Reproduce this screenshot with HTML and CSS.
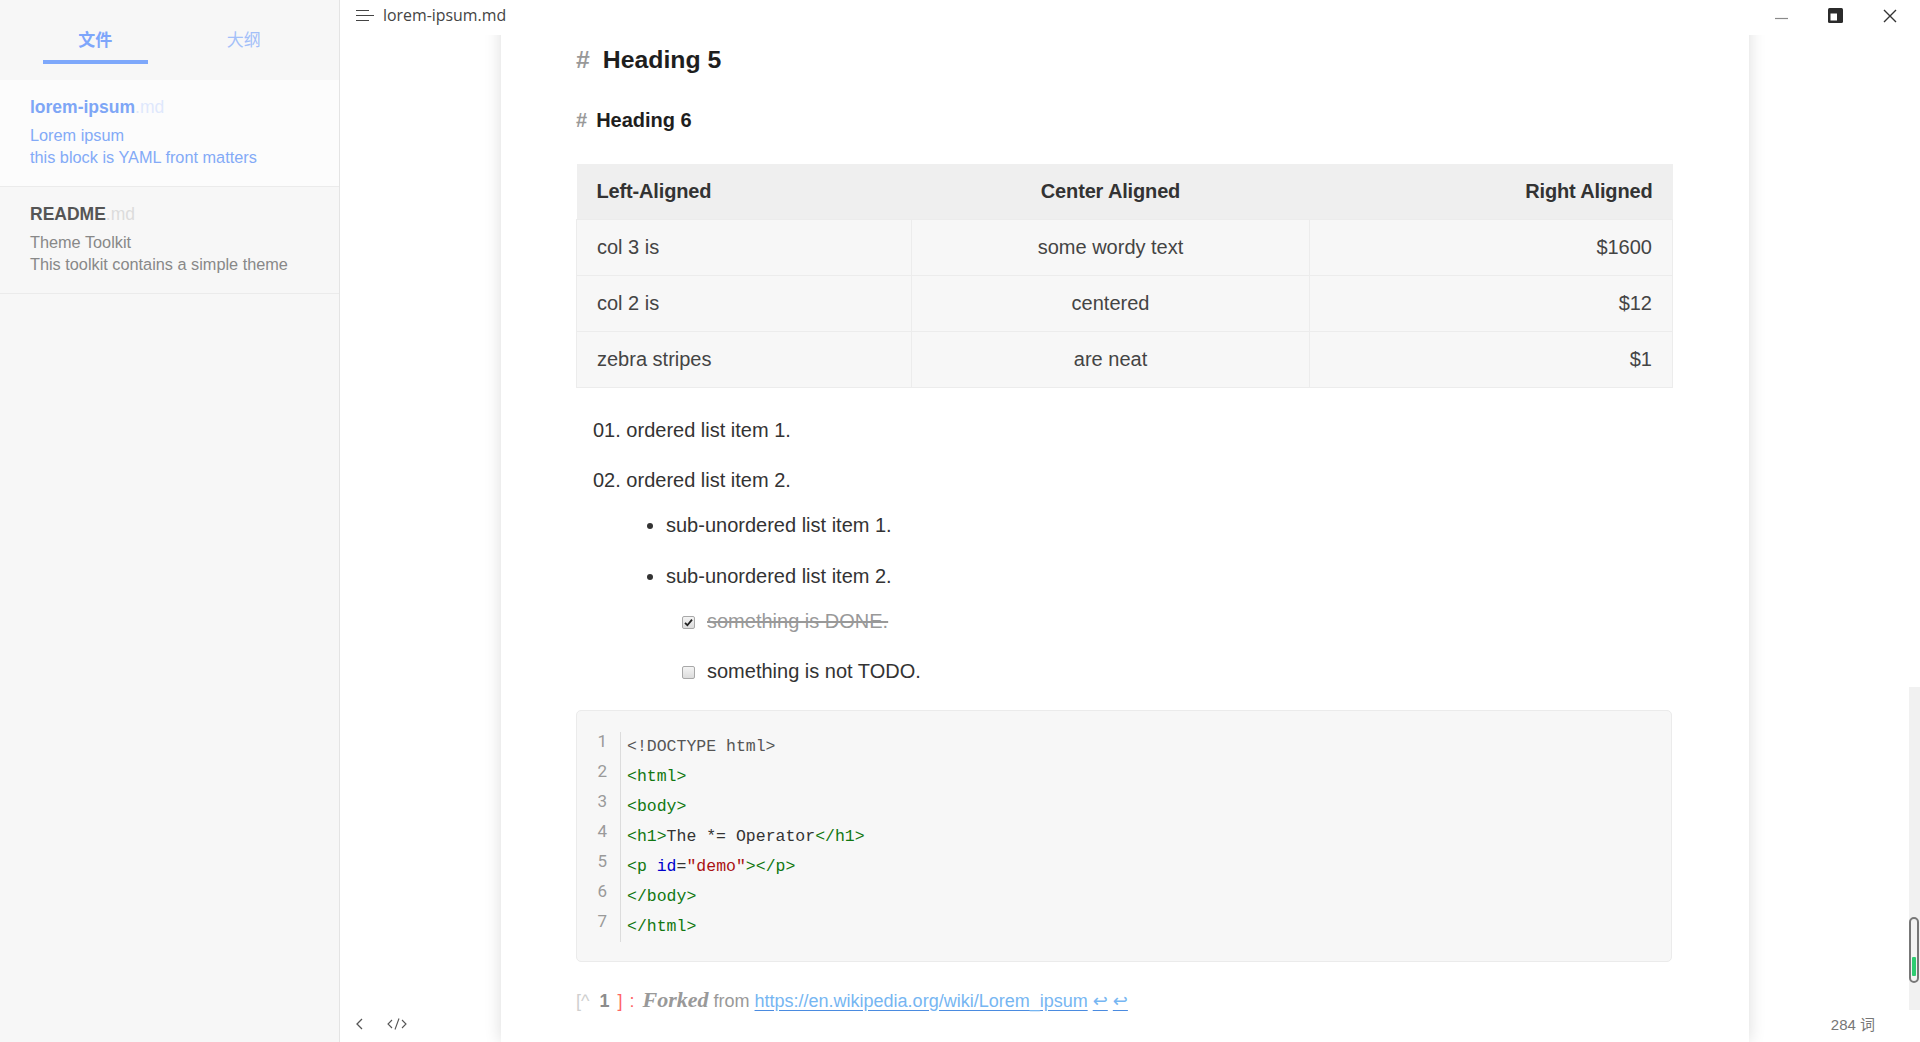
FILE: index.html
```html
<!DOCTYPE html>
<html lang="zh">
<head>
<meta charset="utf-8">
<title>lorem-ipsum.md</title>
<link rel="stylesheet" href="styles.css">
</head>
<body>
<aside class="sidebar">
  <div class="tabs">
    <div class="tab active"><span class="tab-label">文件</span><span class="tab-bar"></span></div>
    <div class="tab"><span class="tab-label">大纲</span></div>
  </div>
  <div class="file active">
    <div class="file-title">lorem-ipsum<span class="ext">.md</span></div>
    <div class="file-desc">Lorem ipsum<br>this block is YAML front matters</div>
  </div>
  <div class="file">
    <div class="file-title">README<span class="ext">.md</span></div>
    <div class="file-desc">Theme Toolkit<br>This toolkit contains a simple theme</div>
  </div>
</aside>

<main class="main">
  <header class="titlebar">
    <svg class="menu-icon" width="20" height="14" viewBox="0 0 20 14"><path d="M0 2.5H13M0 7.5H18M0 12.5H13" stroke="#444" stroke-width="1.1" fill="none"/></svg>
    <span class="doc-name">lorem-ipsum.md</span>
    <div class="wincontrols">
      <svg width="14" height="14" viewBox="0 0 14 14"><path d="M0 7.5H13" stroke="#8a8a8a" stroke-width="1.2"/></svg>
      <svg width="15" height="15" viewBox="0 0 15 15"><rect x="0" y="0" width="15" height="15" rx="1.5" fill="#2b2b2b"/><rect x="2.5" y="5.5" width="6.5" height="7" fill="#fff"/></svg>
      <svg width="14" height="14" viewBox="0 0 14 14"><path d="M1 1L13 13M13 1L1 13" stroke="#333" stroke-width="1.4"/></svg>
    </div>
  </header>

  <div class="scroller">
    <article class="page">
      <h5 class="h5"><span class="hash">#</span>Heading 5</h5>
      <h6 class="h6"><span class="hash">#</span>Heading 6</h6>

      <table class="tbl">
        <thead>
          <tr><th class="c1">Left-Aligned</th><th class="c2">Center Aligned</th><th class="c3">Right Aligned</th></tr>
        </thead>
        <tbody>
          <tr><td class="c1">col 3 is</td><td class="c2">some wordy text</td><td class="c3">$1600</td></tr>
          <tr><td class="c1">col 2 is</td><td class="c2">centered</td><td class="c3">$12</td></tr>
          <tr><td class="c1">zebra stripes</td><td class="c2">are neat</td><td class="c3">$1</td></tr>
        </tbody>
      </table>

      <ol class="olist">
        <li><span class="num">01.</span> ordered list item 1.</li>
        <li><span class="num">02.</span> ordered list item 2.
          <ul class="ulist">
            <li>sub-unordered list item 1.</li>
            <li>sub-unordered list item 2.
              <ul class="tasks">
                <li class="done"><span class="cb checked"><svg width="9" height="9" viewBox="0 0 9 9"><path d="M1 4.8L3.4 7.2L8 1.6" stroke="#222" stroke-width="1.8" fill="none"/></svg></span><span class="task-text">something is DONE.</span></li>
                <li><span class="cb"></span><span class="task-text">something is not TODO.</span></li>
              </ul>
            </li>
          </ul>
        </li>
      </ol>

      <div class="code">
        <div class="gutter"><span>1</span><span>2</span><span>3</span><span>4</span><span>5</span><span>6</span><span>7</span></div>
        <pre class="lines"><span class="meta">&lt;!DOCTYPE html&gt;</span>
<span class="tag">&lt;html&gt;</span>
<span class="tag">&lt;body&gt;</span>
<span class="tag">&lt;h1&gt;</span>The *= Operator<span class="tag">&lt;/h1&gt;</span>
<span class="tag">&lt;p</span> <span class="attr">id</span>=<span class="str">"demo"</span><span class="tag">&gt;&lt;/p&gt;</span>
<span class="tag">&lt;/body&gt;</span>
<span class="tag">&lt;/html&gt;</span></pre>
      </div>

      <p class="footnote"><span class="fn-open">[^</span><span class="fn-num">1</span><span class="fn-close">]</span><span class="fn-colon">:</span><em class="forked">Forked</em> <span class="from">from</span> <a class="link" href="#">https://en.wikipedia.org/wiki/Lorem_ipsum</a> <a class="back" href="#">↩</a> <a class="back" href="#">↩</a></p>
    </article>
  </div>

  <div class="scroll-track">
    <div class="scroll-thumb"><span class="scroll-fill"></span></div>
  </div>

  <footer class="statusbar">
    <svg width="10" height="12" viewBox="0 0 10 12"><path d="M7 1L2 6L7 11" stroke="#555" stroke-width="1.3" fill="none"/></svg>
    <svg class="code-icon" width="20" height="12" viewBox="0 0 20 12"><path d="M5 2L1 6L5 10M15 2L19 6L15 10M12 0.5L8 11.5" stroke="#555" stroke-width="1.1" fill="none"/></svg>
    <span class="words">284 词</span>
  </footer>
</main>
</body>
</html>
```
FILE: styles.css
```css
html, body {
  margin: 0;
  padding: 0;
}
body {
  height: 1042px;
  overflow: hidden;
  display: flex;
  background: #fff;
  font-family: "Liberation Sans", Arial, "Noto Sans CJK SC", sans-serif;
  color: #333;
}

/* ---------- sidebar ---------- */
.sidebar {
  width: 339px;
  flex: none;
  background: #f7f7f7;
  border-right: 1px solid #e4e4e4;
}
.tabs {
  height: 80px;
  display: flex;
  padding: 0 21px;
  box-sizing: border-box;
}
.tab {
  flex: 1;
  display: flex;
  flex-direction: column;
  align-items: center;
  padding-top: 29px;
}
.tab-label {
  font-family: "Noto Sans CJK SC", sans-serif;
  font-size: 17px;
  line-height: 20px;
  color: #a3bff9;
}
.tab.active .tab-label {
  color: #7ea6fb;
  font-weight: bold;
}
.tab-bar {
  display: block;
  width: 105px;
  height: 4px;
  margin-top: 11px;
  background: #7ea8fb;
}
.file {
  padding: 16px 30px 18px;
  border-bottom: 1px solid #ebebeb;
}
.file.active {
  background: #fcfcfc;
}
.file-title {
  font-size: 17.5px;
  font-weight: bold;
  line-height: 22px;
  margin-bottom: 6px;
  color: #555;
}
.file-title .ext {
  font-weight: normal;
  color: #dcdcdc;
}
.file.active .file-title {
  color: #7ea6f6;
}
.file.active .file-title .ext {
  color: #dfe8fc;
}
.file-desc {
  font-size: 16.3px;
  line-height: 22px;
  color: #888;
  margin-top: 1px;
}
.file.active .file-desc {
  color: #83aaf7;
}

/* ---------- main ---------- */
.main {
  flex: 1;
  min-width: 0;
  position: relative;
  display: flex;
  flex-direction: column;
}
.titlebar {
  height: 35px;
  flex: none;
  display: flex;
  align-items: center;
  padding-left: 16px;
  position: relative;
  z-index: 2;
  background: #fff;
}
.menu-icon {
  margin-top: -6px;
}
.doc-name {
  margin-left: 7px;
  margin-top: -6px;
  font-family: "Open Sans", sans-serif;
  font-size: 15.9px;
  color: #444;
}
.wincontrols {
  margin-left: auto;
  display: flex;
  align-items: center;
  margin-top: -3px;
}
.wincontrols svg:nth-child(1) { margin-right: 39px; margin-top: 4px; }
.wincontrols svg:nth-child(2) { margin-right: 40px; margin-top: -2px; }
.wincontrols svg:nth-child(3) { margin-right: 23px; margin-top: -1px; }

.scroller {
  flex: 1;
  min-height: 0;
  overflow: hidden;
  padding-right: 10px;
  display: flex;
  justify-content: center;
}
.page {
  width: 1248px;
  flex: none;
  box-sizing: border-box;
  margin-top: -30px;
  padding: 40px 77px 0 75px;
  box-shadow: 0 0 16px rgba(0, 0, 0, 0.14);
  background: #fff;
  font-size: 20px;
  color: #333;
}

.h5, .h6 {
  margin: 0;
  line-height: 30px;
  font-weight: bold;
  color: #1e1e1e;
}
.h5 { font-size: 24.8px; }
.h6 { font-size: 20px; margin-top: 30px; }
.hash {
  color: #999;
}
.h5 .hash { margin-right: 13px; }
.h6 .hash { margin-right: 9px; }

/* table */
.tbl {
  margin-top: 29px;
  width: 1097px;
  table-layout: fixed;
  border-collapse: collapse;
}
.tbl th, .tbl td {
  box-sizing: border-box;
  padding: 0 20px;
  line-height: 30px;
}
.tbl th {
  height: 55px;
  background: #efefef;
  font-weight: bold;
  color: #333;
  letter-spacing: -0.15px;
}
.tbl td {
  height: 56px;
  background: #f7f7f7;
  border: 1px solid #ececec;
  color: #444;
}
.tbl .c1 { width: 335px; text-align: left; }
.tbl .c2 { width: 398px; text-align: center; }
.tbl .c3 { text-align: right; }

/* lists */
.olist {
  list-style: none;
  margin: 27px 0 0;
  padding: 0 0 0 17px;
}
.olist > li, .ulist > li, .tasks > li {
  line-height: 30px;
}
.olist > li + li { margin-top: 20px; }
.ulist {
  margin: 15px 0 0;
  padding-left: 73px;
  list-style: disc;
}
.ulist > li + li { margin-top: 21px; }
.tasks {
  list-style: none;
  margin: 15px 0 0;
  padding-left: 16px;
}
.tasks > li {
  display: flex;
  align-items: center;
}
.tasks > li + li { margin-top: 20px; }
.cb {
  width: 11px;
  height: 11px;
  border: 1px solid #a8a8a8;
  border-radius: 2px;
  background: linear-gradient(#f4f4f4, #dcdcdc);
  margin-right: 12px;
  margin-top: 3px;
  display: flex;
  align-items: center;
  justify-content: center;
}
.done .task-text {
  color: #999;
  text-decoration: line-through;
}

/* code */
.code {
  margin-top: 24px;
  display: flex;
  background: #f7f7f7;
  border: 1px solid #ebebeb;
  border-radius: 5px;
  padding: 21px 0 19px;
}
.gutter {
  width: 30px;
  padding-right: 13px;
  border-right: 1px solid #dcdcdc;
  display: flex;
  flex-direction: column;
  align-items: flex-end;
  font-family: "Roboto", "Liberation Sans", sans-serif;
  font-size: 17px;
  color: #9a9a9a;
}
.gutter span {
  line-height: 30px;
  transform: translateY(-6px);
}
.lines {
  margin: 0;
  padding-left: 6px;
  font-family: "Liberation Mono", "DejaVu Sans Mono", monospace;
  font-size: 16.5px;
  line-height: 30px;
  color: #333;
}
.meta { color: #555; }
.tag { color: #117711; }
.attr { color: #0000cc; }
.str { color: #aa1111; }

/* footnote */
.footnote {
  margin: 23px 0 0;
  font-size: 18px;
  line-height: 30px;
  color: #999;
}
.fn-open { color: #cfcfcf; }
.fn-num { color: #8c8c8c; font-weight: bold; margin-left: 10px; }
.fn-close { color: #f66; margin-left: 8px; }
.fn-colon { color: #f66; margin-left: 7px; }
.forked {
  margin-left: 8px;
  font-family: "Liberation Serif", "Times New Roman", serif;
  font-size: 22px;
  font-weight: bold;
  font-style: italic;
  color: #999;
}
.from { color: #999; }
.link, .back {
  color: #76b6f2;
  text-decoration: underline;
  text-decoration-color: #4a8be0;
  text-underline-offset: 3px;
}
.back {
  font-family: "DejaVu Sans", sans-serif;
  font-size: 18px;
}

/* scrollbar */
.scroll-track {
  position: absolute;
  right: 0;
  top: 687px;
  width: 11px;
  height: 323px;
  background: #f1f1f1;
}
.scroll-thumb {
  position: absolute;
  top: 230px;
  left: 0;
  width: 10px;
  height: 66px;
  box-sizing: border-box;
  border: 2px solid #777;
  border-radius: 6px;
  background: #f4f4f4;
}
.scroll-fill {
  position: absolute;
  left: 1px;
  top: 38px;
  width: 4px;
  height: 19px;
  background: #2ecc71;
  border-radius: 1px;
}

/* status bar */
.statusbar {
  position: absolute;
  left: 0;
  right: 0;
  bottom: 0;
  height: 38px;
  display: flex;
  align-items: center;
  padding: 0 45px 0 15px;
  z-index: 3;
  pointer-events: none;
}
.statusbar svg { margin-top: 1px; }
.code-icon { margin-left: 22px; }
.words {
  margin-left: auto;
  font-family: "Liberation Sans", "Noto Sans CJK SC", sans-serif;
  font-size: 15px;
  color: #777;
}
```
